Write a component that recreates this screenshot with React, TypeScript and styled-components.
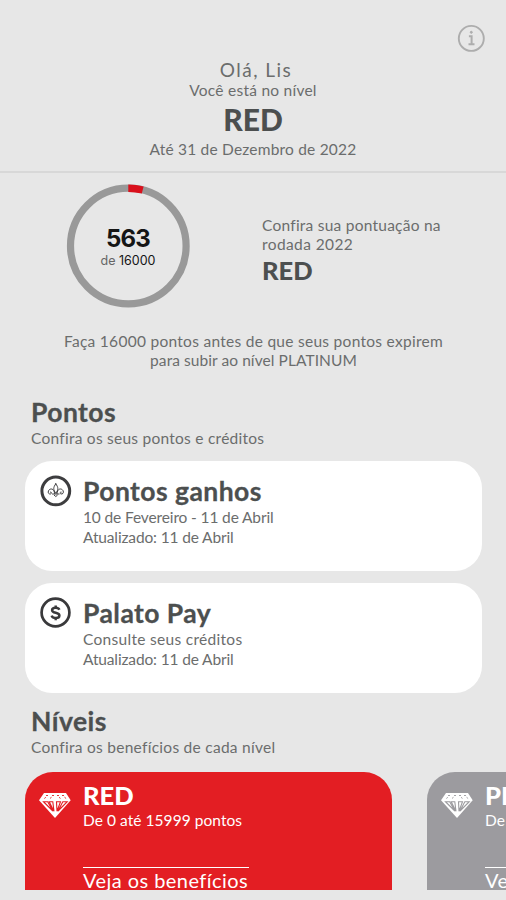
import React from "react";
import styled, { createGlobalStyle } from "styled-components";

const GlobalStyle = createGlobalStyle`
  body {
    margin: 0;
    background: #e7e7e7;
    font-family: Lato, "Open Sans", sans-serif;
    color: #6b6d6d;
  }
`;

const Screen = styled.main`
  width: 506px;
  height: 900px;
  overflow: hidden;
  background: #e7e7e7;
  display: flex;
  flex-direction: column;
`;

const Header = styled.header`
  position: relative;
  box-sizing: border-box;
  height: 173px;
  flex: none;
  padding-top: 58px;
  border-bottom: 2px solid #d8d8d8;
  display: flex;
  flex-direction: column;
  align-items: center;
`;

const InfoButton = styled.button`
  position: absolute;
  top: 24px;
  right: 21px;
  width: 28px;
  height: 28px;
  padding: 0;
  border: 0;
  background: none;
`;

const Greeting = styled.div`
  font-size: 19px;
  line-height: 23px;
  letter-spacing: 1.45px;
  margin-left: 6px;
`;

const Body = styled.div<{ $track?: number; $gap?: number }>`
  font-size: 15.5px;
  line-height: 19.5px;
  letter-spacing: ${(p) => p.$track ?? 0.25}px;
  margin-top: ${(p) => p.$gap ?? 0}px;
  white-space: nowrap;
`;

const LevelName = styled.div<{ $size: number }>`
  font-size: ${(p) => p.$size}px;
  line-height: 1.2;
  font-weight: 900;
  color: #4c4f4f;
`;

const Score = styled.section`
  display: flex;
  box-sizing: border-box;
  height: 146px;
  flex: none;
  padding: 11px 0 0 66px;
`;

const Ring = styled.div`
  position: relative;
  width: 124px;
  height: 124px;
`;

const RingLabel = styled.div`
  position: absolute;
  inset: 0;
  box-sizing: border-box;
  padding-top: 41px;
  text-align: center;
  font-family: Inter, sans-serif;
  color: #151515;
`;

const Points = styled.div`
  font-size: 24px;
  line-height: 27px;
  font-weight: 700;
  letter-spacing: -0.8px;
`;

const Goal = styled.div`
  font-size: 12.5px;
  line-height: 18px;
  span {
    color: #666;
  }
`;

const Round = styled.div`
  margin: 31.5px 0 0 72px;
`;

const Message = styled.section`
  height: 65px;
  flex: none;
  padding: 12.5px 0 0 1px;
  box-sizing: border-box;
  text-align: center;
`;

const SectionHead = styled.div<{ $top: number; $height: number }>`
  height: ${(p) => p.$height}px;
  flex: none;
  margin: ${(p) => p.$top}px 0 0 31px;
`;

const Title = styled.h2`
  margin: 0;
  font-size: 26.5px;
  line-height: 30px;
  font-weight: 700;
  letter-spacing: 0.45px;
  color: #4c4f4f;
  -webkit-text-stroke: 0.3px #4c4f4f;
  white-space: nowrap;
`;

const Card = styled.article`
  display: flex;
  box-sizing: border-box;
  width: 457px;
  height: 110px;
  flex: none;
  margin: 0 0 12px 25px;
  padding: 15px 14px 0;
  border-radius: 27px;
  background: #fff;
`;

const IconSlot = styled.div`
  flex: none;
  width: 44px;
  margin-top: -1px;
  svg {
    display: block;
  }
`;

const Levels = styled.div`
  display: flex;
  gap: 35px;
  height: 118px;
  flex: none;
  margin-left: 25px;
  overflow: hidden;
`;

const LevelCard = styled.article<{ $color: string }>`
  display: flex;
  flex: none;
  box-sizing: border-box;
  width: 367px;
  height: 160px;
  padding: 7.5px 14px 0;
  border-radius: 28px;
  background: ${(p) => p.$color};
  color: #fff;
  ${LevelName} {
    color: #fff;
  }
`;

const DiamondSlot = styled(IconSlot)`
  padding-top: 13px;
`;

const Benefits = styled.div`
  width: 166px;
  margin-top: 36px;
  border-top: 1.5px solid #fff;
  font-size: 20px;
  line-height: 25px;
  letter-spacing: 0.45px;
  white-space: nowrap;
`;

const InfoIcon = () => (
  <svg width="28" height="28" viewBox="0 0 28 28" fill="none" stroke="#adadad">
    <circle cx="14.3" cy="14.4" r="12.5" strokeWidth="1.9" />
    <path d="M11.9 12.200h2.700v7.200M11.500 20.200h6" strokeWidth="2" />
    <circle cx="14.300" cy="8.300" r="1" fill="#adadad" />
  </svg>
);

const LilyIcon = () => (
  <svg width="34" height="34" viewBox="0 0 34 34" fill="none" stroke="#3d3d3f">
    <circle cx="16.8" cy="15.900" r="13.900" strokeWidth="3" />
    <g strokeWidth="1" strokeLinejoin="round" strokeLinecap="round">
      <path d="M16.800 8.800c-3 4-2.500 6 0 9.500 2.500-3.500 3-5.500 0-9.500z" />
      <path d="M15.600 18.500c-.2-5-4.300-5.800-6.100-2.800-1 2.200.6 3.800 2.300 3.200 1.300-.6.6-2.200-.4-1.900M18 18.500c.2-5 4.300-5.800 6.100-2.800 1 2.200-.6 3.800-2.300 3.200-1.300-.6-.6-2.200.4-1.900" />
      <path d="M13.500 19h6.600M15.300 20.300l1.500 1.200 1.500-1.200" />
    </g>
  </svg>
);

const DollarIcon = () => (
  <svg width="34" height="34" viewBox="0 0 34 34" fill="none" stroke="#39393b">
    <circle cx="16.500" cy="15.500" r="13.900" strokeWidth="2.700" />
    <path
      d="M20.400 12.800c-.7-1.500-2-2.100-3.700-2.100-2.200 0-3.600 1-3.600 2.500 0 3.500 7.300 1.600 7.300 5.200 0 1.600-1.500 2.600-3.700 2.600-2 0-3.500-.8-4.100-2.400M16.700 8.500v2M16.700 21v2.300"
      strokeWidth="2.500"
    />
  </svg>
);

const Diamond = ({ cut }: { cut: string }) => (
  <svg width="34" height="28" viewBox="0 0 34 28">
    <path d="M5 1h22l4.700 7.300L16 26 0 8.300z" fill="#fff" />
    <g fill="none" stroke={cut} strokeWidth="1.100">
      <path d="M4.500 9.700h4.200l5.200 9.300zM10.200 9.700h3.600l1.200 9.500zM17.500 9.700h4l-3.500 9.500zM23.800 9.700h4.400l-9.200 9.300z" />
      <path d="M7 3.500h2M13 3.500h2M18 3.500h2M23 3.500h2M5.300 6.500l1.600-1.200M11 6.400l1.500-1.100M20 5.300l1.500 1.100M25.500 5.200l1.600 1.300" strokeWidth="0.900" />
    </g>
  </svg>
);

const cards = [
  { title: "Pontos ganhos", line: "10 de Fevereiro - 11 de Abril", track: -0.13, icon: <LilyIcon /> },
  { title: "Palato Pay", line: "Consulte seus créditos", track: 0.3, icon: <DollarIcon /> },
];

const levels = [
  { name: "RED", range: "De 0 até 15999 pontos", color: "#e31e23" },
  { name: "PLATINUM", range: "De 16000 pontos", color: "#9c9b9f" },
];

export default function App() {
  return (
    <>
      <GlobalStyle />
      <Screen>
        <Header>
          <InfoButton aria-label="Informações">
            <InfoIcon />
          </InfoButton>
          <Greeting>Olá, Lis</Greeting>
          <Body>Você está no nível</Body>
          <LevelName $size={30}>RED</LevelName>
          <Body $gap={3} $track={0.2}>Até 31 de Dezembro de 2022</Body>
        </Header>

        <Score>
          <Ring>
            <svg width="124" height="124" viewBox="0 0 124 124" fill="none">
              <circle cx="62.300" cy="62" r="57.800" stroke="#999" strokeWidth="7.200" />
              <path d="M62.300 4.200a57.800 57.800 0 0 1 14.400 1.820" stroke="#d9101c" strokeWidth="7.400" />
            </svg>
            <RingLabel>
              <Points>563</Points>
              <Goal>
                <span>de</span> 16000
              </Goal>
            </RingLabel>
          </Ring>
          <Round>
            <Body $track={0.24}>Confira sua pontuação na</Body>
            <Body $track={0.4}>rodada 2022</Body>
            <LevelName $size={25.5}>RED</LevelName>
          </Round>
        </Score>

        <Message>
          <Body $track={0.28}>Faça 16000 pontos antes de que seus pontos expirem</Body>
          <Body $track={0.07}>para subir ao nível PLATINUM</Body>
        </Message>

        <SectionHead $top={13} $height={64}>
          <Title>Pontos</Title>
          <Body $gap={1.5}>Confira os seus pontos e créditos</Body>
        </SectionHead>
        {cards.map((c) => (
          <Card key={c.title}>
            <IconSlot>{c.icon}</IconSlot>
            <div>
              <Title>{c.title}</Title>
              <Body $gap={2} $track={c.track}>{c.line}</Body>
              <Body $track={-0.14}>Atualizado: 11 de Abril</Body>
            </div>
          </Card>
        ))}

        <SectionHead $top={1} $height={66}>
          <Title>Níveis</Title>
          <Body $gap={2} $track={0.27}>Confira os benefícios de cada nível</Body>
        </SectionHead>
        <Levels>
          {levels.map((l) => (
            <LevelCard key={l.name} $color={l.color}>
              <DiamondSlot>
                <Diamond cut={l.color} />
              </DiamondSlot>
              <div>
                <LevelName $size={25.5}>{l.name}</LevelName>
                <Body $gap={1} $track={0.05}>{l.range}</Body>
                <Benefits>Veja os benefícios</Benefits>
              </div>
            </LevelCard>
          ))}
        </Levels>
      </Screen>
    </>
  );
}
